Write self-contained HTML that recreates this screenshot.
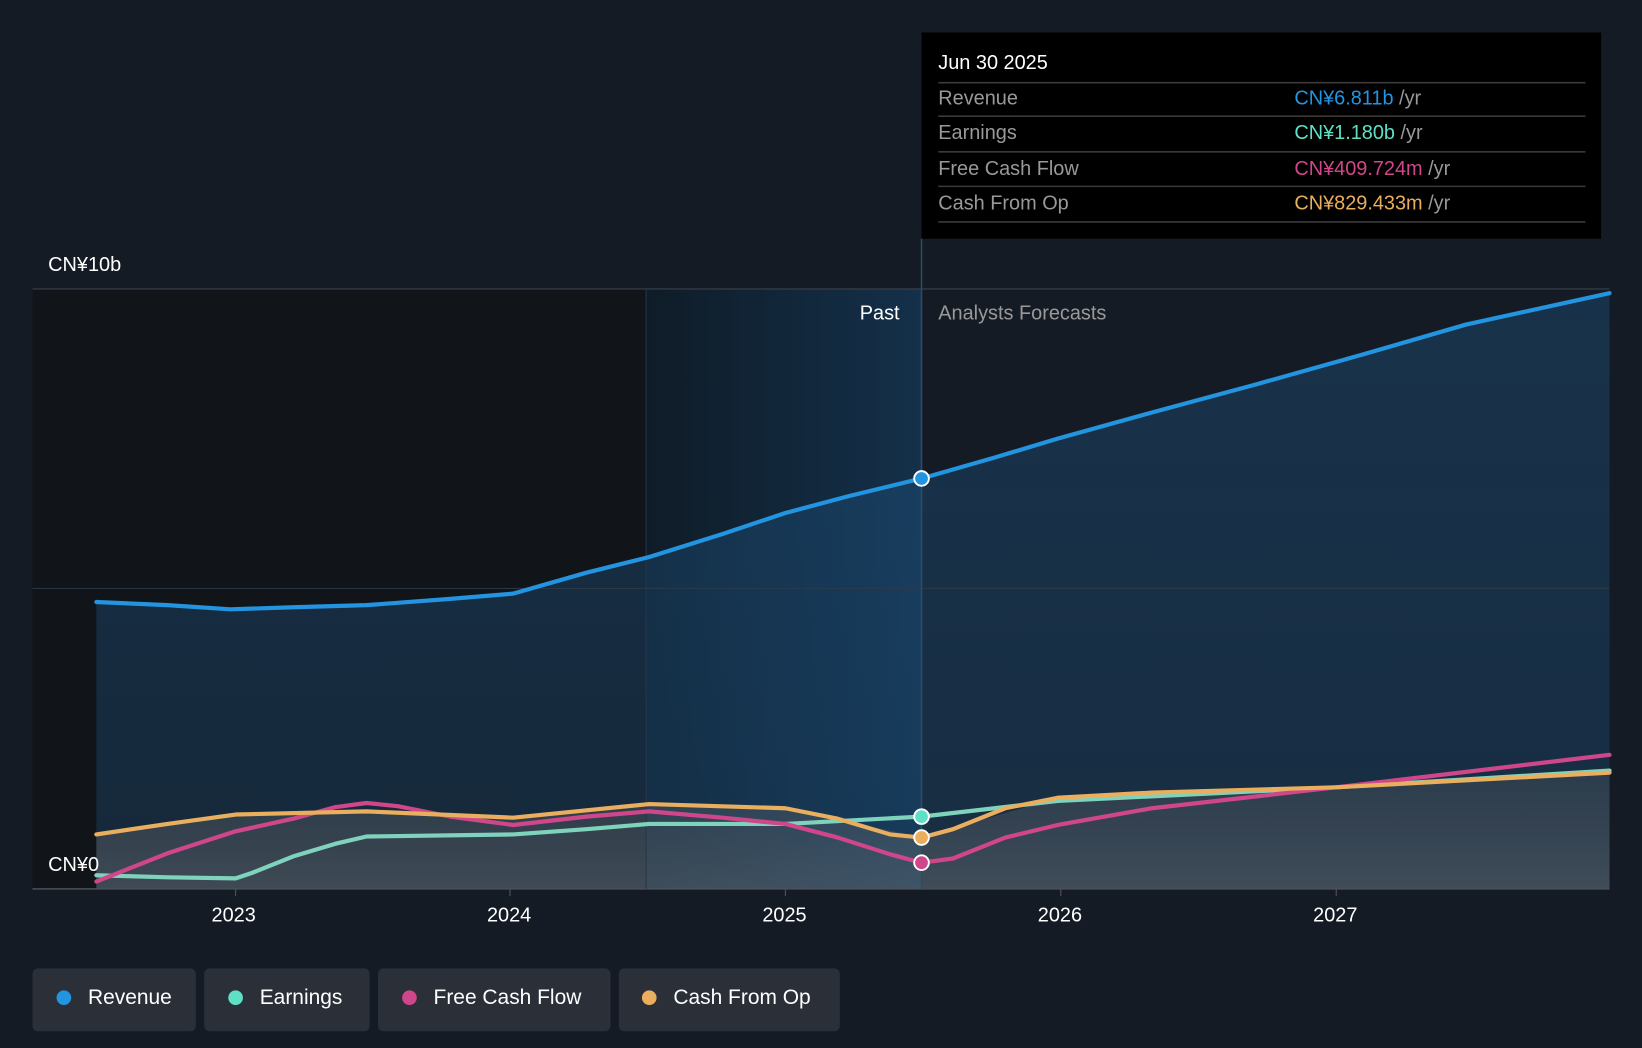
<!DOCTYPE html>
<html><head><meta charset="utf-8"><style>
html,body{margin:0;padding:0;background:#151b24;width:1642px;height:1048px;overflow:hidden}
#w{position:absolute;left:0;top:0;width:1568px;height:1001px;transform:scale(1.04719,1.04695);transform-origin:0 0;font-family:"Liberation Sans","Noto Sans CJK SC",sans-serif}
svg{position:absolute;left:0;top:0}
.t{position:absolute;font-size:19px;color:#fff;white-space:nowrap}
.pill{position:absolute;top:925px;height:60px;background:#2a2f38;border-radius:5px;color:#fff;font-size:20px;line-height:56px}
.pill i{position:absolute;top:21px;width:14px;height:14px;border-radius:50%}
</style></head><body><div id="w">
<svg width="1568" height="1001" viewBox="0 0 1568 1001">
<defs>
<linearGradient id="hg" x1="0" x2="1" y1="0" y2="0"><stop offset="0" stop-color="#0f1c28"/><stop offset="1" stop-color="#14304a"/></linearGradient>
<linearGradient id="rf" x1="0" x2="0" y1="0" y2="1"><stop offset="0" stop-color="#1d4f7a" stop-opacity=".45"/><stop offset="1" stop-color="#1d4f7a" stop-opacity=".35"/></linearGradient>
<linearGradient id="gf" x1="0" x2="0" y1="0" y2="1"><stop offset="0" stop-color="#6a6a6a" stop-opacity=".35"/><stop offset="1" stop-color="#777" stop-opacity=".6"/></linearGradient>
</defs>
<rect x="31" y="276" width="586" height="573" fill="#111419"/>
<rect x="617" y="276" width="263" height="573" fill="url(#hg)"/>
<path d="M92,575 L160,578 L220,582 L280,580 L350,578 L430,572 L490,567 L560,547 L620,532 L690,510 L750,490 L810,474 L880,457 L950,437 L1010,419 L1100,394 L1200,367 L1300,339 L1400,310 L1537,280 L1537,849 L92,849Z" fill="url(#rf)"/>
<path d="M92,797 L160,787 L225,778 L350,775 L490,781 L620,768 L750,772 L880,800 L1010,762 L1276,752 L1537,738 L1537,849 L92,849Z" fill="url(#gf)" opacity=".7"/>
<line x1="31" y1="276" x2="1537" y2="276" stroke="#3a4049" stroke-width="1"/>
<line x1="31" y1="562" x2="1537" y2="562" stroke="#2e3a47" stroke-width="1"/>
<line x1="31" y1="849" x2="1537" y2="849" stroke="#4a5058" stroke-width="1.5"/>
<line x1="617" y1="276" x2="617" y2="849" stroke="#24384a" stroke-width="1"/>
<line x1="880" y1="228" x2="880" y2="849" stroke="#2b4d66" stroke-width="1.5"/>
<g fill="none" stroke-linejoin="round" stroke-linecap="round" stroke-width="4">
<path d="M92,836 L160,838 L225,839 L240,834 L280,818 L320,806 L350,799 L490,797 L560,792 L620,787 L750,787 L880,780 L1010,765 L1276,752 L1537,736" stroke="#7fd3bd"/>
<path d="M92,842 L160,815 L225,794 L280,782 L320,771 L350,767 L380,770 L430,780 L490,788 L560,780 L620,775 L690,781 L750,787 L800,800 L850,816 L880,824 L910,820 L960,800 L1010,788 L1100,772 L1276,752 L1537,721" stroke="#d0468a"/>
<path d="M92,797 L160,787 L225,778 L350,775 L490,781 L560,774 L620,768 L750,772 L800,782 L850,797 L880,800 L910,792 L960,772 L1010,762 L1100,757 L1276,752 L1537,738" stroke="#e9ae5e"/>
<path d="M92,575 L160,578 L220,582 L280,580 L350,578 L430,572 L490,567 L560,547 L620,532 L690,510 L750,490 L810,474 L880,457 L950,437 L1010,419 L1100,394 L1200,367 L1300,339 L1400,310 L1537,280" stroke="#2394e0"/>
</g>
<g stroke="#fff" stroke-width="1.8">
<circle cx="880" cy="457" r="7" fill="#2394e0"/>
<circle cx="880" cy="780" r="7" fill="#5ee0c6"/>
<circle cx="880" cy="800" r="7" fill="#e9ae5e"/>
<circle cx="880" cy="824" r="7" fill="#d0468a"/>
</g>
<rect x="880" y="31" width="649" height="197" fill="#000"/>
<g stroke="#3a3a3a" stroke-width="1.5"><line x1="896" y1="79" x2="1514" y2="79"/><line x1="896" y1="111" x2="1514" y2="111"/><line x1="896" y1="145" x2="1514" y2="145"/><line x1="896" y1="178" x2="1514" y2="178"/><line x1="896" y1="212" x2="1514" y2="212"/></g>
<g stroke="#555" stroke-width="1"><line x1="225" y1="849" x2="225" y2="856"/><line x1="487" y1="849" x2="487" y2="856"/><line x1="750" y1="849" x2="750" y2="856"/><line x1="1013" y1="849" x2="1013" y2="856"/><line x1="1276" y1="849" x2="1276" y2="856"/></g>
</svg>
<div class="t" style="left:896px;top:50px">Jun 30 2025</div>
<div class="t" style="left:896px;top:84px;color:#999">Revenue</div>
<div class="t" style="left:896px;top:117px;color:#999">Earnings</div>
<div class="t" style="left:896px;top:151px;color:#999">Free Cash Flow</div>
<div class="t" style="left:896px;top:184px;color:#999">Cash From Op</div>
<div class="t" style="left:1236px;top:84px;color:#2394e0">CN¥6.811b <span style="color:#999">/yr</span></div>
<div class="t" style="left:1236px;top:117px;color:#5ee0c6">CN¥1.180b <span style="color:#999">/yr</span></div>
<div class="t" style="left:1236px;top:151px;color:#d0468a">CN¥409.724m <span style="color:#999">/yr</span></div>
<div class="t" style="left:1236px;top:184px;color:#e9ae5e">CN¥829.433m <span style="color:#999">/yr</span></div>
<div class="t" style="left:46px;top:243px">CN¥10b</div>
<div class="t" style="left:46px;top:816px">CN¥0</div>
<div class="t" style="left:821px;top:289px">Past</div>
<div class="t" style="left:896px;top:289px;color:#999">Analysts Forecasts</div>
<div class="t" style="left:202px;top:864px">2023</div>
<div class="t" style="left:465px;top:864px">2024</div>
<div class="t" style="left:728px;top:864px">2025</div>
<div class="t" style="left:991px;top:864px">2026</div>
<div class="t" style="left:1254px;top:864px">2027</div>
<div class="pill" style="left:31px;width:156px"><i style="left:23px;background:#2394e0"></i><span style="position:absolute;left:53px">Revenue</span></div>
<div class="pill" style="left:195px;width:158px"><i style="left:23px;background:#5ee0c6"></i><span style="position:absolute;left:53px">Earnings</span></div>
<div class="pill" style="left:361px;width:222px"><i style="left:23px;background:#d0468a"></i><span style="position:absolute;left:53px">Free Cash Flow</span></div>
<div class="pill" style="left:591px;width:211px"><i style="left:22px;background:#e9ae5e"></i><span style="position:absolute;left:52px">Cash From Op</span></div>
</div></body></html>
